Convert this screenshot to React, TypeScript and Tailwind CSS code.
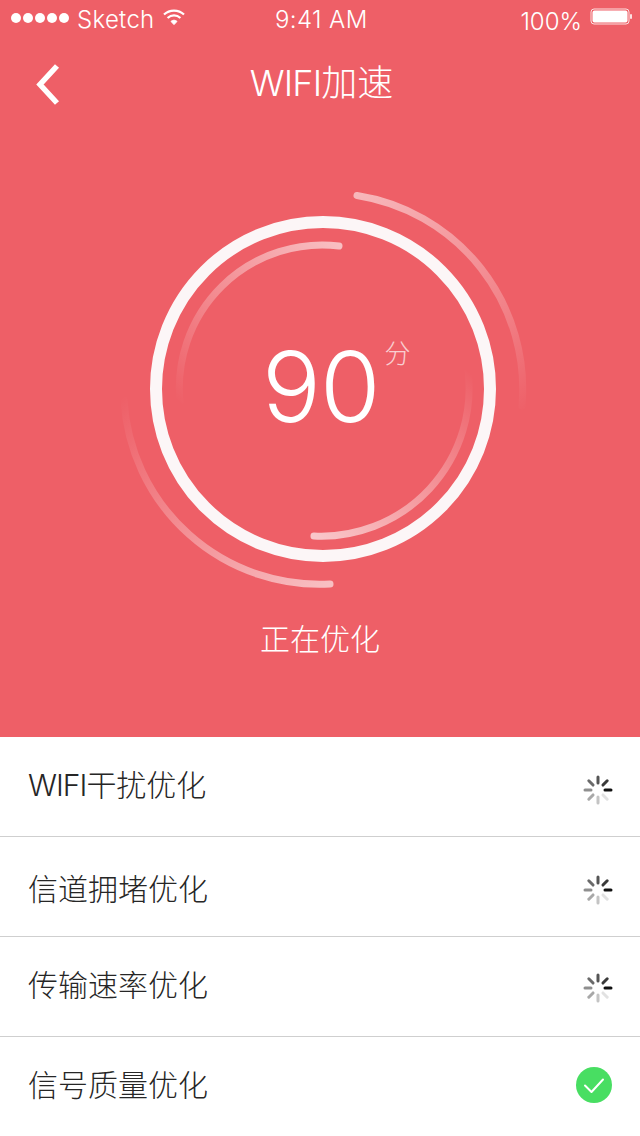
const cjk = 'font-["Inter","Noto_Sans_CJK_SC",sans-serif]';

const items = [
    { latin: 'WIFI', name: '干扰优化', done: false, pad: 'pb-[4px]', icon: 'mt-[6px]' },
    { latin: '', name: '信道拥堵优化', done: false, pad: 'pt-[4px]', icon: 'mt-[6px]' },
    { latin: '', name: '传输速率优化', done: false, pad: 'pb-[4px]', icon: 'mt-[2px]' },
    { latin: '', name: '信号质量优化', done: true, pad: 'pb-[4px]', icon: 'mt-[-4px]' },
];

const tickColors = ['#111111', '#3a3a3a', '#555555', '#6a6a6a', '#8f8f8f', '#a8a8a8', '#c4c4c4', '#e2e2e2'];

function Spinner() {
    return (
        <svg width="30" height="30" viewBox="-15 -15 30 30">
            {tickColors.map((color, i) => (
                <line
                    key={i}
                    x1="7"
                    y1="0"
                    x2="13"
                    y2="0"
                    stroke={color}
                    strokeWidth="3"
                    strokeLinecap="round"
                    transform={`rotate(${-45 * i})`}
                />
            ))}
        </svg>
    );
}

function CheckBadge() {
    return (
        <svg width="36" height="36" viewBox="0 0 36 36">
            <circle cx="18" cy="18" r="18" fill="#48DE62" />
            <path d="M9 18.5l6.5 6.5L27 12.5" fill="none" stroke="#fff" strokeWidth="2" strokeLinecap="round" strokeLinejoin="round" />
        </svg>
    );
}

function Rings() {
    return (
        <svg width="640" height="420" viewBox="0 0 640 420" fill="none" className="block">
            <defs>
                <linearGradient id="outerA" gradientUnits="userSpaceOnUse" x1="355" y1="15" x2="522" y2="235">
                    <stop offset="0" stopColor="#fff" stopOpacity="0.55" />
                    <stop offset="0.65" stopColor="#fff" stopOpacity="0.22" />
                    <stop offset="1" stopColor="#fff" stopOpacity="0" />
                </linearGradient>
                <linearGradient id="outerB" gradientUnits="userSpaceOnUse" x1="330" y1="404" x2="124" y2="215">
                    <stop offset="0" stopColor="#fff" stopOpacity="0.6" />
                    <stop offset="0.65" stopColor="#fff" stopOpacity="0.22" />
                    <stop offset="1" stopColor="#fff" stopOpacity="0" />
                </linearGradient>
                <linearGradient id="innerA" gradientUnits="userSpaceOnUse" x1="340" y1="66" x2="178" y2="222">
                    <stop offset="0" stopColor="#fff" stopOpacity="0.6" />
                    <stop offset="0.6" stopColor="#fff" stopOpacity="0.25" />
                    <stop offset="1" stopColor="#fff" stopOpacity="0" />
                </linearGradient>
                <linearGradient id="innerB" gradientUnits="userSpaceOnUse" x1="313" y1="356" x2="468" y2="190">
                    <stop offset="0" stopColor="#fff" stopOpacity="0.65" />
                    <stop offset="0.6" stopColor="#fff" stopOpacity="0.28" />
                    <stop offset="1" stopColor="#fff" stopOpacity="0" />
                </linearGradient>
            </defs>
            <circle cx="323" cy="209" r="167" stroke="#FCF6F7" strokeWidth="12" />
            <path d="M357 15.5A196 196 0 0 1 522 226" stroke="url(#outerA)" strokeWidth="7" strokeLinecap="round" />
            <path d="M330 404A196 196 0 0 1 124 220" stroke="url(#outerB)" strokeWidth="7" strokeLinecap="round" />
            <path d="M339 66A143 143 0 0 0 180 222" stroke="url(#innerA)" strokeWidth="7" strokeLinecap="round" />
            <path d="M314 356A148 148 0 0 0 468 190" stroke="url(#innerB)" strokeWidth="7" strokeLinecap="round" />
        </svg>
    );
}

export default function App() {
    return (
        <div className={`w-[640px] h-[1136px] overflow-hidden bg-white ${cjk}`}>

            {/* ===== Top panel ===== */}
            <div className="h-[737px] bg-[#EE5F67] text-white">
                <div className="h-[40px] flex items-center pl-[11px] pr-[6px] text-[24px] font-light">
                    <div className="w-[264px] flex items-center">
                        <div className="flex gap-[2px] mr-[8px] mb-[4px]">
                            <span className="w-[10px] h-[10px] rounded-full bg-white" />
                            <span className="w-[10px] h-[10px] rounded-full bg-white" />
                            <span className="w-[10px] h-[10px] rounded-full bg-white" />
                            <span className="w-[10px] h-[10px] rounded-full bg-white" />
                            <span className="w-[10px] h-[10px] rounded-full bg-white" />
                        </div>
                        <span className="leading-none tracking-[0.3px]">Sketch</span>
                        <svg width="24" height="18" viewBox="0 0 22 18" fill="none" stroke="#fff" className="ml-[7px] mb-[6px]">
                            <path d="M1 6.5C6.5 1.2 15.5 1.2 21 6.5" strokeWidth="2.2" />
                            <path d="M4.6 10C8.2 6.6 13.8 6.6 17.4 10" strokeWidth="2.2" />
                            <path d="M8 13.4C9.8 11.8 12.2 11.8 14 13.4L11 16.6Z" fill="#fff" strokeWidth="1" />
                        </svg>
                    </div>
                    <span className="leading-none tracking-[0.4px]">9:41 AM</span>
                    <div className="ml-auto flex items-center">
                        <span className="leading-none mt-[4px] mr-[8px]">100%</span>
                        <svg width="44" height="20" viewBox="0 0 44 20" className="mb-[6px]">
                            <rect x="1" y="2" width="38" height="15" rx="3" fill="none" stroke="#fff" strokeOpacity="0.8" />
                            <rect x="2.5" y="3.5" width="35" height="12" rx="2" fill="#fff" />
                            <rect x="40" y="7" width="2" height="5" rx="1" fill="#fff" fillOpacity="0.8" />
                        </svg>
                    </div>
                </div>

                <div className="relative h-[88px] flex items-center justify-center">
                    <svg width="30" height="44" viewBox="0 0 30 44" fill="none" className="absolute left-[33px] top-[22px]">
                        <path d="M24 4L7 22.5L24 41" stroke="#fff" strokeWidth="5.5" />
                    </svg>
                    <h1 className="text-[36px] leading-none font-light mt-[-2px] ml-[3px]">
                        <span className="tracking-[-0.8px]">WIFI</span>加速
                    </h1>
                </div>

                {/* ===== Score ===== */}
                <div className="relative mt-[52px] h-[420px]">
                    <Rings />
                    <div className="absolute left-[262px] top-[149px] flex items-start">
                        <span className="text-[98px] leading-[116px] font-[350] tracking-[-1px]">90</span>
                        <span className="text-[26px] leading-none ml-[5px] mt-[12px] opacity-70 font-light">分</span>
                    </div>
                </div>
                <p className="text-[30px] leading-none text-center mt-[24px] font-light">正在优化</p>
            </div>

            {/* ===== Checks ===== */}
            <div className="flex flex-col">
                {items.map((item) => (
                    <div key={item.name} className="h-[100px] flex items-center justify-between pl-[28px] pr-[28px] border-b border-[#cfcfcf] last:border-b-0">
                        <span className={`text-[30px] leading-none text-[#262626] font-light ${item.pad}`}>
                            {item.latin && <span className="tracking-[-1px]">{item.latin}</span>}
                            {item.name}
                        </span>
                        {item.done ? (
                            <div className={item.icon}><CheckBadge /></div>
                        ) : (
                            <div className={`${item.icon} mr-[-1px]`}><Spinner /></div>
                        )}
                    </div>
                ))}
            </div>
        </div>
    );
}
